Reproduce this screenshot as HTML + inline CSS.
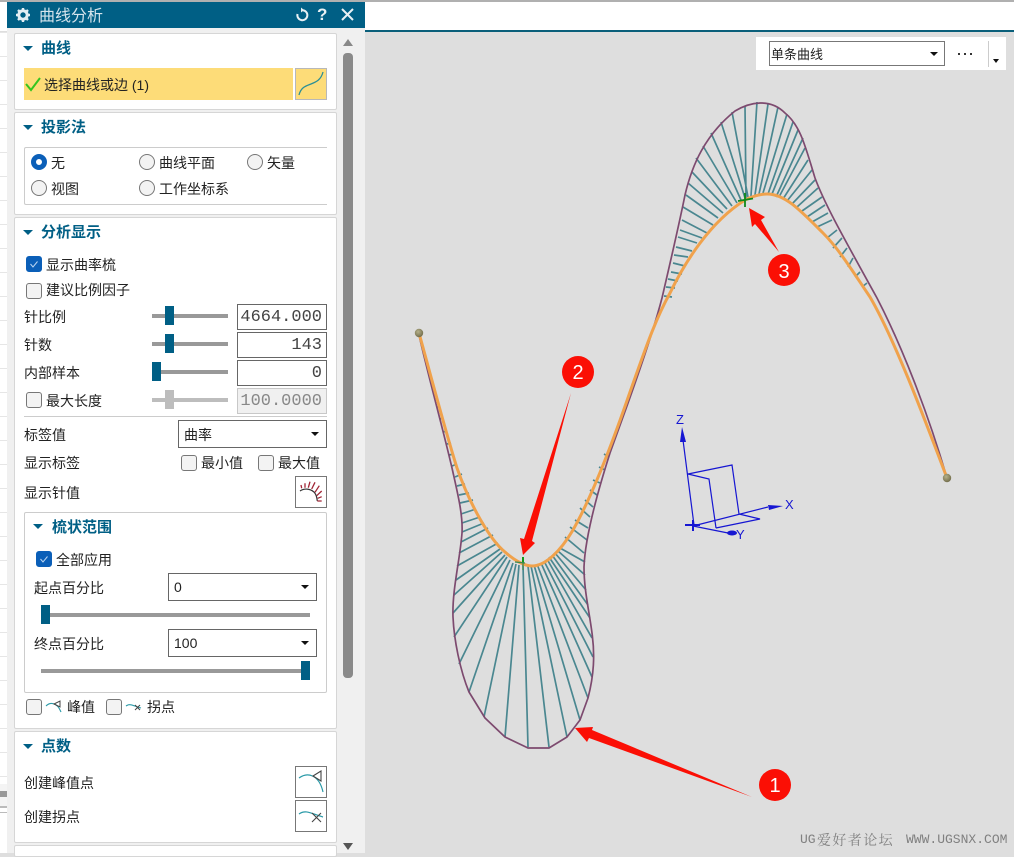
<!DOCTYPE html>
<html><head><meta charset="utf-8">
<style>
html,body{margin:0;padding:0}
body{width:1014px;height:853px;overflow:hidden;position:relative;background:#dedede;font-family:"Liberation Sans","Noto Sans CJK SC",sans-serif;font-size:14px;color:#222}
div,span,svg{position:absolute;box-sizing:border-box}
.t{height:20px;line-height:20px;white-space:nowrap}
.h{height:20px;line-height:20px;font-size:15px;font-weight:bold;color:#005f85;white-space:nowrap}
.sec{left:14px;width:323px;background:#fff;border:1.5px solid #d6d6d6;border-radius:2px}
.cb{width:16px;height:16px;background:#f3f3f3;border:1.3px solid #777;border-radius:3px}
.cb.on{background:#0b5fb8;border-color:#0b5fb8}
.rd{width:16px;height:16px;background:#f3f3f3;border:1.3px solid #777;border-radius:50%}
.tri{width:0;height:0;border-left:5px solid transparent;border-right:5px solid transparent;border-top:5px solid #005f85}
.trk{height:4px;background:#999}
.hd{width:9px;height:19px;background:#005f85}
.in{left:237px;width:90px;height:26px;background:#fff;border:1.3px solid #666;font-family:"Liberation Mono",monospace;font-size:17px;line-height:25px;text-align:right;padding-right:4px;color:#444}
.dd{background:#fff;border:1.3px solid #666;line-height:26px;padding-left:5px}
.ar{width:0;height:0;border-left:4px solid transparent;border-right:4px solid transparent;border-top:4px solid #111}
.btn{left:295px;width:32px;height:32px;background:#fff;border:1.3px solid #777}
.ln{left:0;width:7px;height:1px;background:#e6e6e6}
</style></head>
<body>
<div style="left:0;top:0;width:1014px;height:31px;background:#fff"></div>
<div style="left:0;top:0;width:1014px;height:2px;background:#b0b0b0"></div>
<div style="left:365px;top:30px;width:649px;height:2px;background:#0a5f7a"></div>
<div style="left:0;top:32px;width:7px;height:821px;background:#fff"></div>
<div class="ln" style="top:32px"></div><div class="ln" style="top:56px"></div><div class="ln" style="top:80px"></div><div class="ln" style="top:104px"></div><div class="ln" style="top:128px"></div><div class="ln" style="top:152px"></div><div class="ln" style="top:176px"></div><div class="ln" style="top:200px"></div><div class="ln" style="top:224px"></div><div class="ln" style="top:248px"></div><div class="ln" style="top:272px"></div><div class="ln" style="top:296px"></div><div class="ln" style="top:320px"></div><div class="ln" style="top:344px"></div><div class="ln" style="top:368px"></div><div class="ln" style="top:392px"></div><div class="ln" style="top:416px"></div><div class="ln" style="top:440px"></div><div class="ln" style="top:464px"></div><div class="ln" style="top:488px"></div><div class="ln" style="top:512px"></div><div class="ln" style="top:536px"></div><div class="ln" style="top:560px"></div><div class="ln" style="top:584px"></div><div class="ln" style="top:608px"></div><div class="ln" style="top:632px"></div><div class="ln" style="top:656px"></div><div class="ln" style="top:680px"></div><div class="ln" style="top:704px"></div><div class="ln" style="top:728px"></div><div class="ln" style="top:752px"></div><div class="ln" style="top:776px"></div>
<div style="left:0;top:784px;width:7px;height:22px;background:#f4f4f4"></div>
<div style="left:0;top:791px;width:7px;height:6px;background:#999"></div>
<div style="left:0;top:806px;width:7px;height:2px;background:#bbb"></div>
<div style="left:0;top:812px;width:7px;height:1px;background:#bbb"></div>

<!-- panel -->
<div style="left:7px;top:2px;width:358px;height:851px;background:#f0f0f0"></div>
<div style="left:7px;top:2px;width:358px;height:26px;background:#005f85"></div>
<svg style="left:14px;top:6px" width="18" height="18" viewBox="0 0 18 18"><circle cx="9" cy="9" r="4.2" fill="none" stroke="#e4eef3" stroke-width="3"/><path d="M9 2v3M9 13v3M2 9h3M13 9h3M4 4l2 2M12 12l2 2M14 4l-2 2M6 12l-2 2" stroke="#e4eef3" stroke-width="2.4"/></svg>
<div class="t" style="left:39px;top:7px;font-size:16px;color:#d5e4ec">曲线分析</div>
<svg style="left:294px;top:7px" width="16" height="16" viewBox="0 0 16 16"><path d="M8.5 3.2A5 5 0 1 1 3.5 7" fill="none" stroke="#e8f0f4" stroke-width="2"/><path d="M7 0.5v5l3-2.5z" fill="#e8f0f4"/></svg>
<div class="t" style="left:317px;top:5px;font-size:17px;font-weight:bold;color:#e8f0f4">?</div>
<svg style="left:340px;top:8px" width="15" height="14" viewBox="0 0 15 14"><path d="M2 1l11 11M13 1L2 12" stroke="#e8f0f4" stroke-width="2"/></svg>

<!-- section 1 -->
<div class="sec" style="top:33px;height:77px"></div>
<div class="tri" style="left:23px;top:46px"></div>
<div class="h" style="left:41px;top:39px">曲线</div>
<div style="left:24px;top:68px;width:269px;height:32px;background:#fddc78"></div>
<svg style="left:24px;top:76px" width="18" height="16" viewBox="0 0 18 16"><path d="M2 8l5 6L16 2" fill="none" stroke="#35c51f" stroke-width="2"/></svg>
<div class="t" style="left:44px;top:75px">选择曲线或边 (1)</div>
<div style="left:295px;top:68px;width:32px;height:32px;background:#fddc78;border:1px solid #b8b8b8"></div>
<svg style="left:295px;top:68px" width="32" height="32" viewBox="0 0 32 32"><path d="M4 27C6 19 11 18 16 16C21 14 26 12 28 4" fill="none" stroke="#2c8f96" stroke-width="1.3"/></svg>

<!-- section 2 -->
<div class="sec" style="top:112px;height:103px"></div>
<div class="tri" style="left:23px;top:125px"></div>
<div class="h" style="left:41px;top:118px">投影法</div>
<div style="left:24px;top:147px;width:303px;height:58px;border:1px solid #ccc;border-right:none;border-radius:2px 0 0 2px"></div>
<div class="rd" style="left:31px;top:154px;background:#fff;border:5px solid #0b5fb8"></div>
<div class="t" style="left:51px;top:153px">无</div>
<div class="rd" style="left:139px;top:154px"></div><div class="t" style="left:159px;top:153px">曲线平面</div>
<div class="rd" style="left:247px;top:154px"></div><div class="t" style="left:267px;top:153px">矢量</div>
<div class="rd" style="left:31px;top:180px"></div><div class="t" style="left:51px;top:179px">视图</div>
<div class="rd" style="left:139px;top:180px"></div><div class="t" style="left:159px;top:179px">工作坐标系</div>

<!-- section 3 -->
<div class="sec" style="top:217px;height:512px"></div>
<div class="tri" style="left:23px;top:230px"></div>
<div class="h" style="left:41px;top:223px">分析显示</div>
<div class="cb on" style="left:26px;top:256px"></div>
<svg style="left:26px;top:256px" width="16" height="16" viewBox="0 0 16 16"><path d="M4.5 8l2.5 3 4.5-5.5" fill="none" stroke="#bcd6f2" stroke-width="1"/></svg>
<div class="t" style="left:46px;top:255px">显示曲率梳</div>
<div class="cb" style="left:26px;top:283px"></div>
<div class="t" style="left:46px;top:280px">建议比例因子</div>

<div class="t" style="left:24px;top:307px">针比例</div>
<div class="trk" style="left:152px;top:314px;width:76px"></div><div class="hd" style="left:165px;top:306px"></div>
<div class="in" style="top:304px">4664.000</div>
<div class="t" style="left:24px;top:335px">针数</div>
<div class="trk" style="left:152px;top:342px;width:76px"></div><div class="hd" style="left:165px;top:334px"></div>
<div class="in" style="top:332px">143</div>
<div class="t" style="left:24px;top:363px">内部样本</div>
<div class="trk" style="left:152px;top:370px;width:76px"></div><div class="hd" style="left:152px;top:362px"></div>
<div class="in" style="top:360px">0</div>
<div class="cb" style="left:26px;top:392px"></div>
<div class="t" style="left:46px;top:391px">最大长度</div>
<div class="trk" style="left:152px;top:398px;width:76px;background:#bdbdbd"></div><div class="hd" style="left:165px;top:390px;background:#bdbdbd"></div>
<div class="in" style="top:388px;background:#f0f0f0;border-color:#c8c8c8;color:#888">100.0000</div>
<div style="left:24px;top:416px;width:303px;height:1px;background:#ccc"></div>

<div class="t" style="left:24px;top:425px">标签值</div>
<div class="dd" style="left:178px;top:420px;width:149px;height:28px;line-height:28px">曲率</div>
<div class="ar" style="left:311px;top:432px"></div>
<div class="t" style="left:24px;top:453px">显示标签</div>
<div class="cb" style="left:181px;top:455px"></div><div class="t" style="left:201px;top:453px">最小值</div>
<div class="cb" style="left:258px;top:455px"></div><div class="t" style="left:278px;top:453px">最大值</div>
<div class="t" style="left:24px;top:483px">显示针值</div>
<div class="btn" style="top:476px"></div>
<svg style="left:295px;top:476px" width="32" height="32" viewBox="0 0 32 32"><path d="M5 15C10 11.500 17 13 20 17.300C21.500 19.500 22 22 22.300 25" fill="none" stroke="#333" stroke-width="1.2"/><path d="M6.700 12.300L6 9M10 11.700V7.300M13.300 11.700L15 5.700M16.700 13L20 6.300M20 16.300L24.300 9.700M21.700 19.700L26.700 15M22.700 22.300L26.700 20.700M22.300 25H26.700" stroke="#a02535" stroke-width="1.300"/></svg>

<!-- sub group -->
<div style="left:24px;top:512px;width:303px;height:181px;border:1px solid #ccc;border-radius:2px"></div>
<div class="tri" style="left:33px;top:524px"></div>
<div class="h" style="left:52px;top:518px">梳状范围</div>
<div class="cb on" style="left:36px;top:551px"></div>
<svg style="left:36px;top:551px" width="16" height="16" viewBox="0 0 16 16"><path d="M4.5 8l2.5 3 4.5-5.5" fill="none" stroke="#bcd6f2" stroke-width="1"/></svg>
<div class="t" style="left:56px;top:550px">全部应用</div>
<div class="t" style="left:34px;top:578px">起点百分比</div>
<div class="dd" style="left:168px;top:573px;width:149px;height:28px">0</div>
<div class="ar" style="left:301px;top:585px"></div>
<div class="trk" style="left:41px;top:613px;width:269px"></div><div class="hd" style="left:41px;top:605px"></div>
<div class="t" style="left:34px;top:634px">终点百分比</div>
<div class="dd" style="left:168px;top:629px;width:149px;height:28px">100</div>
<div class="ar" style="left:301px;top:641px"></div>
<div class="trk" style="left:41px;top:669px;width:269px"></div><div class="hd" style="left:301px;top:661px"></div>

<div class="cb" style="left:26px;top:699px"></div>
<svg style="left:45px;top:699px" width="18" height="16" viewBox="0 0 18 16"><path d="M1 7C5 3 12 3 16 13" fill="none" stroke="#2a9aa8" stroke-width="1.1"/><path d="M9 5l6-3v6z" fill="none" stroke="#444" stroke-width="1"/></svg>
<div class="t" style="left:67px;top:697px">峰值</div>
<div class="cb" style="left:106px;top:699px"></div>
<svg style="left:125px;top:699px" width="18" height="16" viewBox="0 0 18 16"><path d="M1 7C5 4 9 7 16 9" fill="none" stroke="#2a9aa8" stroke-width="1.1"/><path d="M10 6l5 5M15 6l-5 5" stroke="#444" stroke-width="1"/></svg>
<div class="t" style="left:147px;top:697px">拐点</div>

<!-- section 4 -->
<div class="sec" style="top:731px;height:112px"></div>
<div class="tri" style="left:23px;top:744px"></div>
<div class="h" style="left:41px;top:737px">点数</div>
<div class="t" style="left:24px;top:773px">创建峰值点</div>
<div class="btn" style="top:766px"></div>
<svg style="left:295px;top:766px" width="32" height="32" viewBox="0 0 32 32"><path d="M4 12C12 6 24 8 28 26" fill="none" stroke="#2a9aa8" stroke-width="1.2"/><path d="M18 10l8-5v10z" fill="none" stroke="#444" stroke-width="1.1"/></svg>
<div class="t" style="left:24px;top:807px">创建拐点</div>
<div class="btn" style="top:800px"></div>
<svg style="left:295px;top:800px" width="32" height="32" viewBox="0 0 32 32"><path d="M4 14C11 9 17 14 28 17" fill="none" stroke="#2a9aa8" stroke-width="1.2"/><path d="M17 13l9 9M26 13l-9 9" stroke="#444" stroke-width="1.1"/></svg>
<div class="sec" style="top:845px;height:12px"></div>

<!-- scrollbar -->
<div style="left:343px;top:53px;width:10px;height:625px;background:#8a8a8a;border-radius:4px"></div>
<svg style="left:342px;top:38px" width="12" height="10"><path d="M1 8L6 1l5 7z" fill="#888"/></svg>
<svg style="left:342px;top:842px" width="12" height="10"><path d="M1 1h10L6 8z" fill="#555"/></svg>

<!-- toolbar -->
<div style="left:756px;top:37px;width:250px;height:33px;background:#fff"></div>
<div style="left:769px;top:41px;width:176px;height:25px;border:1.3px solid #777;background:#fff"></div>
<div class="t" style="left:771px;top:45px;font-size:13px">单条曲线</div>
<div class="ar" style="left:930px;top:52px"></div>
<div style="left:958px;top:53px;width:2px;height:2px;background:#333"></div>
<div style="left:964px;top:53px;width:2px;height:2px;background:#333"></div>
<div style="left:970px;top:53px;width:2px;height:2px;background:#333"></div>
<div style="left:988px;top:41px;width:1px;height:26px;background:#ccc"></div>
<div class="ar" style="left:993px;top:59px;border-left-width:3px;border-right-width:3px"></div>

<!-- canvas -->
<svg style="left:0;top:0" width="1014" height="853" viewBox="0 0 1014 853">
<defs><radialGradient id="b" cx="40%" cy="35%" r="70%"><stop offset="0" stop-color="#b5b08a"/><stop offset="1" stop-color="#6f6a48"/></radialGradient></defs>
<!-- needles -->
<path fill="none" stroke="#4a8790" stroke-width="1.700" d="
M437 407L440 407M440 419L443 418M443 432L447 431M447 444L451 443M449 455L454 454M452 466L457 464M455 477L462 474M457 486L465 484M459 495L469 493M460 503L473 500M461 514L476 509M462 523L480 517M462 532L484 523M461 542L488 528M459 553L493 535M457 566L498 543
M456 580L500 549M454 595L502 552M453 613L505 555M454 637L507 557M459 664L510 560M469 692L513 563M484 717L516 564M505 737L519 565M528 747L523 565
M549 747L528 566M567 737L531 566M580 720L534 565M588 698L537 564M592 677L541 563M593 657L544 561M592 638L547 559M590 618L549 557M588 605L552 555M586 590L555 553M585 575L558 551M585 562L560 548M584 553L565 537M587 540L570 527M588 528L575 520M590 517L580 508M593 507L585 500M597 495L590 490M600 483L593 480M605 470L599 467M609 457L604 454
M664 296L672 297M666 287L675 288M668 279L678 281M671 272L682 274M673 263L685 266M674 255L688 257M676 247L692 251M678 237L697 243M680 230L702 238M682 220L707 233M683 207L713 225M686 195L718 218M688 183L723 213M692 172L727 209M696 158L732 206M703 146L737 203M711 133L741 200M721 122L745 198M732 112L748 197M745 106L746 198M757 102L751 196M768 104L755 195M778 107L759 194M787 114L763 193M793 122L768 194M798 130L772 194M803 138L776 197M805 148L779 197M808 160L783 199M812 170L787 201M815 180L792 204M818 188L797 207M822 197L802 211M825 205L807 217M828 213L812 222M832 220L817 227M837 230L827 238M842 238L833 248M847 248L840 257M853 258L848 267M860 272L855 277M867 283L862 287"/>
<!-- comb outline -->
<path fill="none" stroke="#7d4a6f" stroke-width="1.700" stroke-linejoin="round" d="M419 335C428 375 442 425 452 468C458 495 463 515 462 533C460 560 452 590 453 617C454 640 460 670 469 692L485 718L505 737L528 748L549 748L567 737L580 720L588 698C594 675 595 655 592 633C589 610 584 590 584 567C585 540 595 500 610 453L623 417C640 370 655 325 662 298C672 255 680 220 685 195C692 165 705 135 735 111C750 102 770 98 785 113C800 125 805 145 815 178C825 205 845 240 877 298C905 352 930 420 947 478"/>
<!-- curve -->
<path fill="none" stroke="#f0a24c" stroke-width="3" d="M419 333C432 380 445 430 457 468C470 505 490 540 505 552C515 561 525 566 532 566C545 566 560 552 573 530C590 500 610 450 630 392C645 350 655 320 670 293C685 262 710 222 745 200C755 195 762 194 767 194C785 194 800 210 823 233C840 250 855 275 870 297C895 340 925 420 947 478"/>
<circle cx="419" cy="333" r="4.200" fill="url(#b)"/><circle cx="947" cy="478" r="4.200" fill="url(#b)"/>
<!-- markers -->
<path d="M745 193V207M738 201L753 198.500" stroke="#0f8a1a" stroke-width="1.800" fill="none"/>
<path d="M523 557V563" stroke="#0f9a1a" stroke-width="2" fill="none"/>
<path d="M515 562L525 563M523 563V570" stroke="#3c8a50" stroke-width="1.300" fill="none"/>
<!-- triad -->
<g fill="none" stroke="#1616d2" stroke-width="1.200">
<path d="M683 440L694 525M688 474L732 465L739 514M688 474L709 479L716 528M693 526L768 507M693 526L728 533M716 528L760 519L739 514"/>
<path d="M685 525H700M693 520V531" stroke-width="2"/>
</g>
<path d="M682 427L680 442L686 442z" fill="#1616d2"/>
<path d="M783 506L768 505L769 510z" fill="#1616d2"/>
<ellipse cx="732" cy="533" rx="5" ry="2.500" fill="#1616d2"/>
<text x="676" y="424" font-family="Liberation Sans" font-size="13" fill="#1616d2">Z</text>
<text x="785" y="509" font-family="Liberation Sans" font-size="13" fill="#1616d2">X</text>
<text x="736" y="539" font-family="Liberation Sans" font-size="13" fill="#1616d2">Y</text>
<!-- red arrows -->
<g fill="#fb0f05">
<path d="M575 728L593 727L592 730L752 797L589 738L587 742z"/>
<path d="M523 555L535 543L532 541L571 393L524 539L520 538z"/>
<path d="M749 208L765 217L761 220L779 252L755 224L752 227z"/>
<circle cx="775" cy="785" r="16"/><circle cx="578" cy="372" r="16"/><circle cx="784" cy="270" r="16"/>
</g>
<g font-family="Liberation Sans" font-size="20" fill="#fff" text-anchor="middle">
<text x="775" y="792">1</text><text x="578" y="379">2</text><text x="784" y="278">3</text>
</g>
</svg>
<!-- watermark -->
<div class="t" style="left:800px;top:830px;font-family:'Liberation Mono',monospace;font-size:13px;color:#808080">UG</div>
<div class="t" style="left:817px;top:830px;font-family:'Noto Serif CJK SC',serif;font-size:14px;letter-spacing:1.400px;color:#808080">爱好者论坛</div>
<div class="t" style="left:906px;top:830px;font-family:'Liberation Mono',monospace;font-size:13px;color:#808080">WWW.UGSNX.COM</div>
</body></html>
